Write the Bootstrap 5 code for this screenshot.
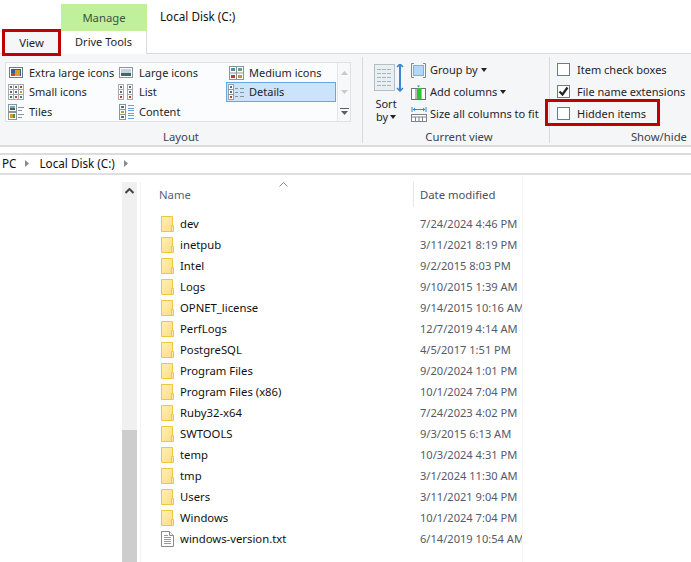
<!DOCTYPE html>
<html lang="en"><head><meta charset="utf-8"><title>Local Disk (C:)</title>
<link href="https://cdn.jsdelivr.net/npm/bootstrap@5.3.0/dist/css/bootstrap.min.css" rel="stylesheet">
<style>
html,body{height:562px;overflow:hidden;background:#fff}
body{font-family:"Noto Sans","Open Sans",sans-serif;font-size:11.3px;color:#1e1e2a;width:691px;line-height:16px}
.ico{display:block;flex:none}
.tabs{height:54px;border-bottom:1px solid #dadbdc}
.tab-view{height:27px;margin-top:29px;border:3px solid #c00000;background:#f5f6f7;text-align:center;line-height:21px;margin-left:2px;width:59px;position:relative;z-index:1}
.ctx{width:86px}
.ctx-head{height:27px;margin-top:4px;background:#c1f09a;text-align:center;line-height:28px;color:#3d5244}
.ctx-sub{height:23px;text-align:center;line-height:22px;border-right:1px solid #dadbdc;font-size:11px;background:#fff}
.disk-title{margin-left:13px;margin-top:8px;font-size:11.7px;color:#111}
.ribbon{height:93px;background:#f5f6f7;border-bottom:2px solid #dcdcdc;width:691px;font-size:11px}
.grp{position:relative;height:86px;margin-top:3px;border-right:1px solid #dadbdc;flex:none}
.grp-name{position:absolute;bottom:-2px;left:0;right:0;text-align:center;color:#3c4250;line-height:16px;font-size:11.3px}
.gal{margin:5px 0 0 5px;width:346px;height:60px;background:#fbfcfd;border:1px solid #dfe1e3;display:flex}
.gal-cells{width:331px;display:grid;grid-template-columns:110px 110px 110px;grid-template-rows:19px 20px 19px}
.cell{display:flex;align-items:center;gap:5px;padding-left:2px;white-space:nowrap}
.cell.sel{background:#cce4fb;border:1px solid #62a8e6;padding-left:1px}
.gal-sb{flex:1;border-left:1px solid #e3e5e7;display:grid;grid-template-rows:19px 20px 19px;background:#f7f8f9}
.gal-sb span{display:flex;align-items:center;justify-content:center}
.sort{width:30px;margin-left:11px;padding-top:7px}
.sort-lab{line-height:13px;margin-top:5px;text-align:center;width:24px;white-space:nowrap}
.cv-list{padding-top:2px;margin-left:7px}
.cv-row{height:22px;display:flex;align-items:center;gap:3px;white-space:nowrap}
.caret-d{display:inline-block;width:0;height:0;border:3px solid transparent;border-top:4px solid #222;border-bottom:0;vertical-align:2px}
.sort-lab .caret-d{margin-left:2px}
.sh-list{padding:2px 0 0 7px}
.sh-row{height:22px;display:flex;align-items:center;gap:7px;white-space:nowrap;position:relative}
.cbx{width:13px;height:13px;border:1px solid #6a7a90;background:#fff;display:block;flex:none;margin-top:-2px}
.mark-red{position:absolute;left:-12px;top:-4px;width:115px;height:27px;border:3px solid #c00000;pointer-events:none}
.addr{margin-top:6px;height:22px;border-top:2px solid #dcdcdc;border-bottom:2px solid #dfdfdf;display:flex;align-items:center;padding-left:2px;padding-bottom:2px;gap:9px;font-size:11.7px}
.addr b{font-weight:400;color:#111}
.content{display:flex;height:387px}
.leftpane{width:122px;flex:none}
.sb{width:15px;flex:none;background:#f0f0f0;display:flex;flex-direction:column;margin-top:7px}
.sb-top{height:248px;padding-top:6px;display:flex;justify-content:center;align-items:flex-start}
.sb-thumb{flex:1;background:#cdcdcd}
.sep{width:1px;background:#f3f3f3;margin:7px 0 0 3px;flex:none}
.files{flex:none;width:382px;position:relative;padding-left:18px;border-right:1px solid #f7f7f7}
.hdr{display:flex;height:31px;padding-top:7px;color:#5a5f7a}
.hname{width:254px;line-height:25px}
.hdate{padding-left:6px;border-left:1px solid #e6e6e6;height:25px;line-height:25px;white-space:nowrap;color:#4a4f60}
.sort-up{position:absolute;left:138px;top:7px}
.rows{padding:7px 0 0 2px}
.frow{display:flex;height:21px;align-items:center;overflow:hidden}
.fname{width:259px;display:flex;align-items:center;gap:6px;flex:none;white-space:nowrap;color:#111}
.fdate{white-space:nowrap;color:#555a6a;flex:1;overflow:hidden;font-size:11.1px}
</style></head><body>
<div class="tabs d-flex">
  <div class="tab-view">View</div>
  <div class="ctx">
    <div class="ctx-head">Manage</div>
    <div class="ctx-sub">Drive Tools</div>
  </div>
  <div class="disk-title">Local Disk (C:)</div>
</div>
<div class="ribbon d-flex">
  <div class="grp" style="width:363px">
    <div class="gal">
      <div class="gal-cells">
        <div class="cell"><svg class="ico" width="16" height="16" viewBox="0 0 16 16"><rect x="1.500" y="2.500" width="13" height="10" fill="#fff" stroke="#6e7a82"/><rect x="3" y="4" width="10" height="7" fill="#2f5f9f"/><rect x="7" y="5" width="5" height="6" fill="#d8a02a"/><rect x="3" y="8" width="4" height="3" fill="#b8502a"/></svg>Extra large icons</div>
        <div class="cell"><svg class="ico" width="16" height="16" viewBox="0 0 16 16"><rect x="1.500" y="2.500" width="13" height="10" fill="#fff" stroke="#8a949b"/><rect x="3" y="4" width="10" height="7" fill="#bcd3e6"/><rect x="3" y="8" width="10" height="3" fill="#3e6a5a"/></svg>Large icons</div>
        <div class="cell"><svg class="ico" width="16" height="16" viewBox="0 0 16 16"><rect x="1.500" y="1.500" width="14" height="13" fill="#fff" stroke="#8a949b"/><path d="M8.500 1v14M1 8h15" stroke="#8a949b"/><rect x="3" y="3" width="4" height="3" fill="#5d89ad"/><rect x="10" y="3" width="4" height="3" fill="#6e9a7c"/><rect x="3" y="10" width="4" height="3" fill="#c0392b"/><rect x="10" y="10" width="4" height="3" fill="#b59a3a"/></svg>Medium icons</div>
        <div class="cell"><svg class="ico" width="16" height="16" viewBox="0 0 16 16"><rect x=".5" y=".5" width="15" height="15" fill="#fff" stroke="#a4a9ad"/><path d="M5.500 0v16M10.500 0v16M0 5.500h16M0 10.500h16" stroke="#a4a9ad"/><g fill="#5a6a75"><rect x="2" y="2" width="2" height="2"/><rect x="7" y="2" width="2" height="2"/><rect x="2" y="7" width="2" height="2"/><rect x="7" y="7" width="2" height="2"/><rect x="12" y="12" width="2" height="2"/></g><g fill="#b93a2e"><rect x="12" y="2" width="2" height="2"/><rect x="7" y="12" width="2" height="2"/></g><rect x="12" y="7" width="2" height="2" fill="#c29a2e"/><rect x="2" y="12" width="2" height="2" fill="#3a7a4a"/></svg>Small icons</div>
        <div class="cell"><svg class="ico" width="16" height="16" viewBox="0 0 16 16"><g fill="#fff" stroke="#a4a9ad"><rect x=".5" y=".5" width="5" height="15"/><rect x="9.500" y=".5" width="5" height="15"/></g><path d="M0 5.500h6M0 10.500h6M9 5.500h6M9 10.500h6" stroke="#a4a9ad"/><g fill="#5a6a75"><rect x="2" y="2" width="2" height="2"/><rect x="2" y="7" width="2" height="2"/><rect x="11" y="2" width="2" height="2"/><rect x="11" y="7" width="2" height="2"/></g><rect x="2" y="12" width="2" height="2" fill="#b93a2e"/><rect x="11" y="12" width="2" height="2" fill="#b93a2e"/></svg>List</div>
        <div class="cell sel"><svg class="ico" width="16" height="16" viewBox="0 0 16 16"><rect x=".5" y=".5" width="5" height="15" fill="#fff" stroke="#99a0a6"/><path d="M0 5.500h6M0 10.500h6M7 4.500h3M12 4.500h4M7 8.500h3M12 8.500h4M7 12.500h3M12 12.500h4" stroke="#8b939a"/><rect x="2" y="2" width="2" height="2" fill="#5a6a75"/><rect x="2" y="7" width="2" height="2" fill="#5a6a75"/><rect x="2" y="12" width="2" height="2" fill="#b93a2e"/></svg>Details</div>
        <div class="cell"><svg class="ico" width="16" height="16" viewBox="0 0 16 16"><rect x=".5" y=".5" width="8" height="7" fill="#fff" stroke="#8a949b"/><rect x=".5" y="8.500" width="8" height="7" fill="#fff" stroke="#8a949b"/><rect x="2" y="2" width="5" height="2" fill="#7ea6c6"/><rect x="2" y="4" width="5" height="2" fill="#3e6a5a"/><rect x="2" y="10" width="3" height="4" fill="#c9a02e"/><rect x="5" y="10" width="2" height="4" fill="#4f8f4f"/><path d="M10 3.500h6M10 6.500h4M10 10.500h6M10 13.500h4" stroke="#8b939a"/></svg>Tiles</div>
        <div class="cell"><svg class="ico" width="16" height="16" viewBox="0 0 16 16"><rect x="1.500" y=".5" width="6" height="15" fill="#fff" stroke="#8a949b"/><path d="M1 5.500h7M1 10.500h7" stroke="#8a949b"/><rect x="3" y="2" width="3" height="2" fill="#5a6a75"/><rect x="3" y="7" width="3" height="2" fill="#c29a2e"/><rect x="3" y="12" width="3" height="2" fill="#5a6a75"/><path d="M10 1.500h6M10 4.500h6M10 6.500h6M10 9.500h6M10 11.500h6M10 14.500h6" stroke="#6a9ee0"/></svg>Content</div>
      </div>
      <div class="gal-sb">
        <span><svg width="7" height="4"><path d="M3.500 0 7 4H0z" fill="#c7c9cc"/></svg></span>
        <span><svg width="7" height="4"><path d="M3.500 4 7 0H0z" fill="#c7c9cc"/></svg></span>
        <span><svg width="9" height="7"><path d="M0 .5h9" stroke="#55606a"/><path d="M1 3h7L4.500 7z" fill="#55606a"/></svg></span>
      </div>
    </div>
    <div class="grp-name">Layout</div>
  </div>
  <div class="grp d-flex" style="width:187px">
    <div class="sort">
      <svg class="ico" width="30" height="28" viewBox="0 0 30 28"><rect x=".5" y=".5" width="20" height="26" fill="#e9eef1" stroke="#b5bec4"/><path d="M3 5.500h15M3 9.500h15M3 13.500h15M3 17.500h15M3 21.500h15" stroke="#a9b4bb" stroke-dasharray="4 1"/><path d="M26 1v25" stroke="#3a86cf" stroke-width="2"/><path d="M23 3l3-3 3 3M23 24l3 3 3-3" stroke="#3a86cf" fill="none" stroke-width="1.500"/></svg>
      <div class="sort-lab">Sort<br>by<i class="caret-d"></i></div>
    </div>
    <div class="cv-list">
      <div class="cv-row"><svg class="ico" width="16" height="15" viewBox="0 0 16 15"><path d="M3 .5H.5v14H3M12 .5h2.500v14H12" fill="none" stroke="#7c8a94"/><rect x="2.500" y="2.500" width="10" height="10" fill="#b3d7f7" stroke="#7cb2e0"/></svg>Group by<i class="caret-d"></i></div>
      <div class="cv-row"><svg class="ico" width="16" height="15" viewBox="0 0 16 15"><rect x=".5" y="3.500" width="14" height="11" fill="#fff" stroke="#6d747a"/><path d="M5 4v10M10 4v10" stroke="#6d747a"/><rect x="6" y="3" width="4" height="11" fill="#2fc42f"/><path d="M6 .5h3L7.500 2.500z" fill="#3a86cf"/></svg>Add columns<i class="caret-d"></i></div>
      <div class="cv-row"><svg class="ico" width="16" height="15" viewBox="0 0 16 15"><path d="M1 0v5M15 0v5M2 2.500h12" stroke="#3a86cf" fill="none"/><path d="M2 2.500l2-2v4zM14 2.500l-2-2v4z" fill="#3a86cf"/><rect x=".5" y="7.500" width="15" height="7" fill="#fff" stroke="#7d8388"/><path d="M.5 10h15M4.500 10v5M8 10v5M11.500 10v5" stroke="#7d8388"/></svg>Size all columns to fit</div>
    </div>
    <div class="grp-name" style="padding-left:6px">Current view</div>
  </div>
  <div class="grp flex-grow-1" style="border-right:0">
    <div class="sh-list">
      <div class="sh-row"><span class="cbx"></span>Item check boxes</div>
      <div class="sh-row"><span class="cbx"><svg class="d-block" width="11" height="11" viewBox="0 0 11 11"><path d="M1.500 5.500l3 3 5-7" fill="none" stroke="#222" stroke-width="2.200"/></svg></span>File name extensions</div>
      <div class="sh-row"><span class="cbx"></span>Hidden items<i class="mark-red"></i></div>
    </div>
    <div class="grp-name" style="text-align:right;right:4px">Show/hide</div>
  </div>
</div>
<div class="addr"><b>PC</b><svg width="5" height="7"><path d="M0 0l4 3.500L0 7z" fill="#8a8a8a"/></svg><b>Local Disk (C:)</b><svg width="5" height="7"><path d="M0 0l4 3.500L0 7z" fill="#8a8a8a"/></svg></div>
<div class="content">
  <div class="leftpane"></div>
  <div class="sb"><div class="sb-top"><svg width="9" height="6"><path d="M.5 5l4-4 4 4" fill="none" stroke="#444" stroke-width="2"/></svg></div><div class="sb-thumb"></div></div>
  <div class="sep"></div>
  <div class="files">
    <svg class="sort-up" width="9" height="5"><path d="M.5 4.500l4-4 4 4" fill="none" stroke="#8a8a8a"/></svg>
    <div class="hdr"><div class="hname">Name</div><div class="hdate">Date modified</div></div>
    <div class="rows" id="rows"></div>
  </div>
</div>
<script>
const folder='<svg class="ico" width="13" height="16" viewBox="0 0 13 16"><defs><linearGradient id="fg" x1="0" y1="0" x2="1" y2="1"><stop offset="0" stop-color="#ffefb8"/><stop offset="1" stop-color="#fedd82"/></linearGradient></defs><path d="M.5.5h11v15H.5z" fill="url(#fg)" stroke="#edc83f"/><path d="M10.500 9.500h2v6h-2z" fill="#ffe9a8" stroke="#edc83f"/></svg>';
const txt='<svg class="ico" width="13" height="16" viewBox="0 0 13 16"><path d="M.5.500h8l4 4v11H.5z" fill="#fff" stroke="#8a8a8a"/><path d="M8.500.5v4h4" fill="#eee" stroke="#8a8a8a"/><path d="M3 4.500h4M3 6.500h7M3 8.500h7M3 10.500h7M3 12.500h7" stroke="#9a9a9a"/></svg>';
const d=[["dev","7/24/2024 4:46 PM"],["inetpub","3/11/2021 8:19 PM"],["Intel","9/2/2015 8:03 PM"],["Logs","9/10/2015 1:39 AM"],["OPNET_license","9/14/2015 10:16 AM"],["PerfLogs","12/7/2019 4:14 AM"],["PostgreSQL","4/5/2017 1:51 PM"],["Program Files","9/20/2024 1:01 PM"],["Program Files (x86)","10/1/2024 7:04 PM"],["Ruby32-x64","7/24/2023 4:02 PM"],["SWTOOLS","9/3/2015 6:13 AM"],["temp","10/3/2024 4:31 PM"],["tmp","3/1/2024 11:30 AM"],["Users","3/11/2021 9:04 PM"],["Windows","10/1/2024 7:04 PM"],["windows-version.txt","6/14/2019 10:54 AM"]];
document.getElementById('rows').innerHTML=d.map((r,i)=>`<div class="frow"><div class="fname">${i==15?txt:folder}<span>${r[0]}</span></div><div class="fdate">${r[1]}</div></div>`).join('');
</script>
<script src="https://cdn.jsdelivr.net/npm/bootstrap@5.3.0/dist/js/bootstrap.bundle.min.js"></script>
</body></html>
